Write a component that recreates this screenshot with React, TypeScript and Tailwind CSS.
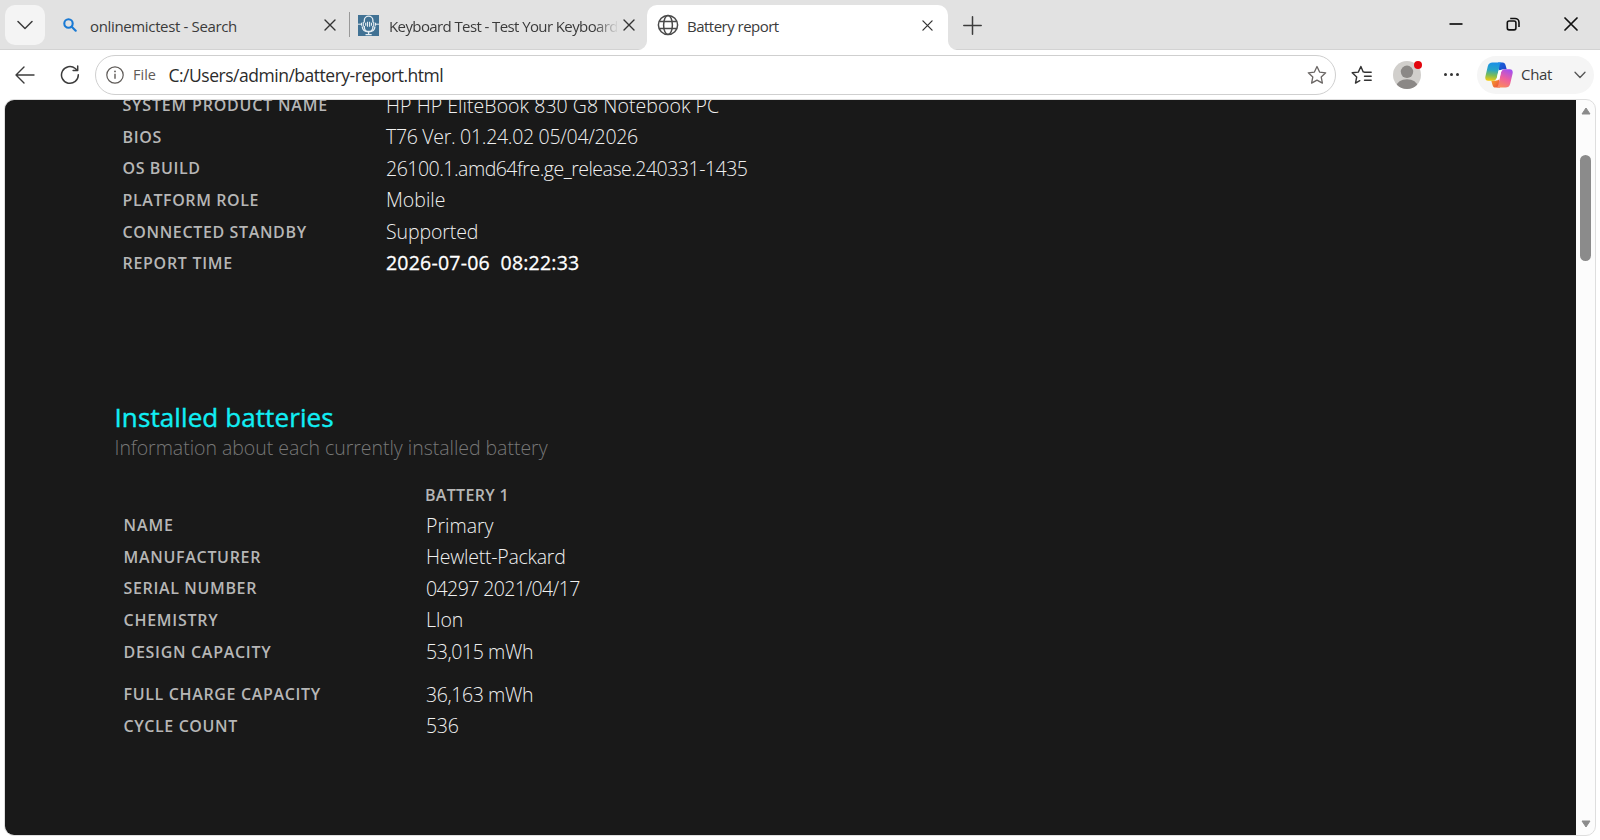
import type { ReactNode } from "react"

type Row = { label: string; value: string; strong?: boolean; tall?: boolean; labelTrack: string; valueTrack: string }

const systemRows: Row[] = [
  { label: "SYSTEM PRODUCT NAME", value: "HP HP EliteBook 830 G8 Notebook PC", labelTrack: "tracking-[0.800px]", valueTrack: "tracking-[0.050px]" },
  { label: "BIOS", value: "T76 Ver. 01.24.02 05/04/2026", labelTrack: "tracking-[0.700px]", valueTrack: "tracking-[-0.300px]" },
  { label: "OS BUILD", value: "26100.1.amd64fre.ge_release.240331-1435", labelTrack: "tracking-[0.600px]", valueTrack: "tracking-[-0.500px]" },
  { label: "PLATFORM ROLE", value: "Mobile", labelTrack: "tracking-[0.600px]", valueTrack: "tracking-[0px]" },
  { label: "CONNECTED STANDBY", value: "Supported", labelTrack: "tracking-[0.640px]", valueTrack: "tracking-[-0.100px]" },
  { label: "REPORT TIME", value: "2026-07-06  08:22:33", strong: true, labelTrack: "tracking-[0.700px]", valueTrack: "tracking-[0.220px]" },
]

const batteryRows: Row[] = [
  { label: "NAME", value: "Primary", labelTrack: "tracking-[0.900px]", valueTrack: "tracking-[0px]" },
  { label: "MANUFACTURER", value: "Hewlett-Packard", labelTrack: "tracking-[0.700px]", valueTrack: "tracking-[-0.250px]" },
  { label: "SERIAL NUMBER", value: "04297 2021/04/17", labelTrack: "tracking-[0.650px]", valueTrack: "tracking-[-0.580px]" },
  { label: "CHEMISTRY", value: "LIon", labelTrack: "tracking-[0.750px]", valueTrack: "tracking-[-0.200px]" },
  { label: "DESIGN CAPACITY", value: "53,015 mWh", labelTrack: "tracking-[0.700px]", valueTrack: "tracking-[-0.400px]" },
  { label: "FULL CHARGE CAPACITY", value: "36,163 mWh", tall: true, labelTrack: "tracking-[0.650px]", valueTrack: "tracking-[-0.400px]" },
  { label: "CYCLE COUNT", value: "536", labelTrack: "tracking-[0.600px]", valueTrack: "tracking-[-0.300px]" },
]

function CloseIcon({ className }: { className?: string }) {
  return (
    <svg viewBox="0 0 12 12" className={className} fill="none" stroke="currentColor" strokeWidth="1.4" strokeLinecap="round">
      <path d="M1 1l10 10M11 1L1 11" />
    </svg>
  )
}

function GlobeIcon() {
  return (
    <svg viewBox="0 0 22 22" className="h-[22px] w-[22px] shrink-0" fill="none" stroke="#4a4a4a" strokeWidth="1.5">
      <circle cx="11" cy="11" r="9.6" />
      <ellipse cx="11" cy="11" rx="4.4" ry="9.6" />
      <path d="M2.2 7.5h17.6M2.2 14.5h17.6" />
    </svg>
  )
}

function MicIcon() {
  return (
    <svg viewBox="0 0 21 21" className="h-[21px] w-[21px] shrink-0">
      <rect width="21" height="21" fill="#417294" />
      <g fill="none" stroke="#e6eef3" strokeWidth="1.3">
        <path d="M6.3 7.5V5.5a4.3 4.3 0 0 1 8.6 0v2M6.3 11v1.2a4.3 4.3 0 0 0 8.6 0V11" />
        <path d="M4.2 11.5c.3 3.4 2.8 5.4 6.4 5.4s6.1-2 6.4-5.4M10.6 17v2.6M7.5 19.6h6.2" />
        <path d="M0 9.2h3M18 9.2h3" strokeWidth="1" />
        <path d="M3.5 7.7v3M5.3 7v4.5M7.7 7.7v3M9.5 6.7v5M11.6 6.7v5M13.5 7.7v3M15.7 7v4.5M17.5 7.7v3" strokeWidth="1.1" />
      </g>
    </svg>
  )
}

function CopilotIcon() {
  return (
    <svg viewBox="0 0 28 26" className="h-[26px] w-[28px] shrink-0">
      <defs>
        <linearGradient id="cp-left" x1="0.4" y1="0" x2="0.3" y2="1">
          <stop offset="0" stopColor="#1b8fe8" />
          <stop offset="0.4" stopColor="#27a5c6" />
          <stop offset="0.7" stopColor="#7cbc57" />
          <stop offset="1" stopColor="#f2cb12" />
        </linearGradient>
        <linearGradient id="cp-right" x1="0.7" y1="0" x2="0.3" y2="1">
          <stop offset="0" stopColor="#a450ee" />
          <stop offset="0.5" stopColor="#ee5f9e" />
          <stop offset="1" stopColor="#fb8a58" />
        </linearGradient>
        <linearGradient id="cp-top" x1="0" y1="0" x2="1" y2="1">
          <stop offset="0" stopColor="#1868df" />
          <stop offset="1" stopColor="#1e3fc4" />
        </linearGradient>
        <linearGradient id="cp-bottom" x1="0" y1="0" x2="1" y2="1">
          <stop offset="0" stopColor="#f9b12a" />
          <stop offset="1" stopColor="#e8433c" />
        </linearGradient>
      </defs>
      <path d="M13 .4h4.6c1.6 0 2.5 1 2.9 2.6l1.2 4.3h-3.4c-2 0-3.4 1-4 3.2z" fill="url(#cp-top)" />
      <path d="M15 25.6h-4.6c-1.6 0-2.5-1-2.9-2.6l-1.2-4.3h3.4c2 0 3.4-1 4-3.2z" fill="url(#cp-bottom)" />
      <path d="M7.5 .4H17c-1.5.3-2 1.2-2.4 3L12 15.5c-.5 2-1.8 3.2-3.8 3.2H3.2C.8 18.7-.1 17 .4 14.5L2.8 4.2C3.5 1.6 5 .4 7.5 .4z" fill="url(#cp-left)" />
      <path d="M20.5 25.6H11c1.5-.3 2-1.2 2.4-3L16 10.5c.5-2 1.8-3.2 3.8-3.2h5c2.4 0 3.3 1.7 2.8 4.2l-2.4 10.3c-.7 2.6-2.2 3.8-4.7 3.8z" fill="url(#cp-right)" />
      <path d="M14.4 8h3.2c-1 .6-1.500 1.500-1.800 2.800l-1.300 5.400c-.3 1-.8 1.600-1.600 2h-2.800c1-.6 1.500-1.500 1.800-2.800l1.200-5.200c.200-1 .600-1.700 1.300-2.200z" fill="#fff" />
    </svg>
  )
}

function TabTitle({ children, className }: { children: ReactNode; className: string }) {
  return <span className={`overflow-hidden whitespace-nowrap text-[15px] leading-[22px] text-[#3b3b3b] ${className}`}>{children}</span>
}

function TabBar() {
  return (
    <div className="flex h-[50px] items-start border-b border-[#d3d3d3] bg-[#e2e2e2]">
      <div className="ml-[5px] mt-[5px] flex h-10 w-10 items-center justify-center rounded-[10px] bg-[#f4f4f4]">
        <svg viewBox="0 0 16 10" className="h-[10px] w-4" fill="none" stroke="#3c3c3c" strokeWidth="1.5" strokeLinecap="round" strokeLinejoin="round">
          <path d="M1 1.5l7 7 7-7" />
        </svg>
      </div>

      <div className="flex h-[50px] w-[304px] items-center pl-[18px]">
        <svg viewBox="0 0 14 14" className="h-[14px] w-[14px] shrink-0" fill="none" stroke="#1a7ad4" strokeWidth="2.1" strokeLinecap="round">
          <circle cx="5.5" cy="5.5" r="4.2" />
          <path d="M8.7 8.7l4 4" />
        </svg>
        <TabTitle className="ml-[13px] mt-px w-[230px] tracking-[-0.350px]">onlinemictest - Search</TabTitle>
        <CloseIcon className="ml-[4px] h-3 w-3 shrink-0 text-[#333]" />
      </div>

      <div className="mt-[12px] h-[25px] w-px bg-[#999]" />

      <div className="flex h-[50px] w-[297px] items-center pl-2">
        <MicIcon />
        <TabTitle className="ml-[10px] mt-px w-[228px] tracking-[-0.600px] [mask-image:linear-gradient(to_right,black_205px,transparent_230px)]">
          Keyboard Test - Test Your Keyboard
        </TabTitle>
        <CloseIcon className="ml-[6px] h-3 w-3 shrink-0 text-[#333]" />
      </div>

      <div className="relative mt-[5px] flex h-[45px] w-[301px] items-center rounded-t-[10px] bg-white pl-[10px]">
        <svg viewBox="0 0 9 9" className="absolute -left-[9px] bottom-0 h-[9px] w-[9px]">
          <path d="M9 0v9H0a9 9 0 0 0 9-9z" fill="#fff" />
        </svg>
        <svg viewBox="0 0 9 9" className="absolute -right-[9px] bottom-0 h-[9px] w-[9px]">
          <path d="M0 0v9h9a9 9 0 0 1-9-9z" fill="#fff" />
        </svg>
        <div className="mb-[5px] flex items-center">
          <GlobeIcon />
          <TabTitle className="ml-[8px] mt-px w-[231px] tracking-[-0.520px]">Battery report</TabTitle>
          <CloseIcon className="ml-[4px] h-[11px] w-[11px] shrink-0 text-[#333]" />
        </div>
      </div>

      <svg viewBox="0 0 19 19" className="ml-[15px] mt-[16px] h-[19px] w-[19px]" fill="none" stroke="#3c3c3c" strokeWidth="1.5" strokeLinecap="round">
        <path d="M9.5 0.8v17.4M0.8 9.5h17.4" />
      </svg>

      <div className="ml-auto mr-[22px] mt-[17px] flex items-center">
        <svg viewBox="0 0 14 14" className="h-[14px] w-[14px]" stroke="#111" strokeWidth="1.7">
          <path d="M0.5 7h13" />
        </svg>
        <svg viewBox="0 0 14 14" className="ml-[43px] h-[14px] w-[14px]" fill="none" stroke="#111" strokeWidth="1.6">
          <rect x="1.3" y="4" width="8.6" height="8.9" rx="1.8" />
          <path d="M4.2 1.5h4.8a4 4 0 0 1 4 4v4.5" />
        </svg>
        <svg viewBox="0 0 14 14" className="ml-[44px] h-[14px] w-[14px]" stroke="#111" strokeWidth="1.7" strokeLinecap="round">
          <path d="M1 1l12 12M13 1L1 13" />
        </svg>
      </div>
    </div>
  )
}

const starPath = "M10 1.5l2.6 5.6 6.1.7-4.5 4.2 1.2 6.1L10 15.1l-5.4 3 1.2-6.1L1.3 7.8l6.1-.7z"

function AddressBar() {
  return (
    <div className="flex h-[49px] items-center bg-white">
      <svg viewBox="0 0 20 18" className="ml-[15px] h-[18px] w-5" fill="none" stroke="#3c3c3c" strokeWidth="1.4" strokeLinecap="round" strokeLinejoin="round">
        <path d="M19 9H1M9 1L1 9l8 8" />
      </svg>
      <svg viewBox="0 0 20 20" className="ml-[25px] h-5 w-5" fill="none" stroke="#3c3c3c" strokeWidth="1.5" strokeLinecap="round" strokeLinejoin="round">
        <path d="M18.3 9.7A8.4 8.4 0 1 1 15.3 3.5l2.3 2M17.7 1v4.6h-4.6" />
      </svg>

      <div className="ml-[15px] flex h-10 w-[1241px] items-center rounded-full border border-[#cfcfcf] bg-white">
        <svg viewBox="0 0 18 18" className="ml-[10px] h-[18px] w-[18px]" fill="none" stroke="#5f5b58" strokeWidth="1.2">
          <circle cx="9" cy="9" r="8.2" />
          <path d="M9 7.8v5" strokeWidth="1.4" />
          <circle cx="9" cy="5.4" r="0.9" fill="#5f5b58" stroke="none" />
        </svg>
        <span className="ml-[9px] text-[14.5px] text-[#5f5b58]">File</span>
        <span className="ml-[12.500px] mt-[2px] text-[17.5px] tracking-[-0.480px] text-[#2b2b2b]">C:/Users/admin/battery-report.html</span>
        <svg viewBox="0 0 20 20" className="ml-auto mr-[8px] h-5 w-5" fill="none" stroke="#6a6664" strokeWidth="1.3" strokeLinejoin="round">
          <path d={starPath} />
        </svg>
      </div>

      <svg viewBox="0 0 21 20" className="ml-[15px] h-5 w-[21px]" fill="none" stroke="#333" strokeWidth="1.4" strokeLinecap="round" strokeLinejoin="round">
        <path d="M13 7l-.8-.1L9.9 1.5 7.3 7.1l-6.1.7L5.7 12l-1.2 6.1 4.3-2.4M13.5 7.3h6.7M13.5 11.3h6.7M13.5 15.3h6.7" />
      </svg>

      <div className="relative ml-[21px] h-7 w-7">
        <svg viewBox="0 0 28 28" className="h-7 w-7">
          <clipPath id="avatar-clip">
            <circle cx="14" cy="14" r="14" />
          </clipPath>
          <g clipPath="url(#avatar-clip)">
            <rect width="28" height="28" fill="#d1cfcc" />
            <circle cx="14" cy="10.8" r="6.2" fill="#8b8886" />
            <ellipse cx="14" cy="25.5" rx="10.5" ry="7.3" fill="#8b8886" />
          </g>
        </svg>
        <div className="absolute -right-px top-0 h-[8px] w-[8px] rounded-full bg-[#e3050d]" />
      </div>

      <div className="ml-[23px] flex gap-[3px]">
        <div className="h-[3px] w-[3px] rounded-full bg-[#333]" />
        <div className="h-[3px] w-[3px] rounded-full bg-[#333]" />
        <div className="h-[3px] w-[3px] rounded-full bg-[#333]" />
      </div>

      <div className="ml-auto mr-[6px] flex h-[38px] w-[117px] items-center rounded-full bg-[#f5f5f5] pl-2">
        <CopilotIcon />
        <span className="ml-[8px] text-[15px] tracking-[-0.3px] text-[#3b3b3b]">Chat</span>
        <svg viewBox="0 0 12 8" className="ml-auto mr-[8px] h-2 w-3" fill="none" stroke="#555" strokeWidth="1.3" strokeLinecap="round" strokeLinejoin="round">
          <path d="M1 1.2l5 5.3 5-5.3" />
        </svg>
      </div>
    </div>
  )
}

function ReportRow({ row, labelWidth }: { row: Row; labelWidth: string }) {
  return (
    <div className={`flex h-[31.6px] items-start whitespace-pre leading-[31.6px] ${row.tall ? "mt-[11px]" : ""}`}>
      <span className={`shrink-0 pt-[0.700px] text-[16px] font-semibold text-[#b6b6b6] ${labelWidth} ${row.labelTrack}`}>{row.label}</span>
      <span className={`text-[19.5px] ${row.strong ? "font-medium text-white [-webkit-text-stroke:0.3px]" : "font-light text-[#f0f0f0]"} ${row.valueTrack}`}>{row.value}</span>
    </div>
  )
}

function Report() {
  return (
    <main className="h-[735px] flex-1 overflow-hidden bg-[#191919]">
      <div className="-mt-[10.500px] pl-[117.500px]">
        {systemRows.map((row) => (
          <ReportRow key={row.label} row={row} labelWidth="w-[263.500px]" />
        ))}
      </div>

      <section className="mt-[119.500px] pl-[109.5px]">
        <h2 className="text-[26px] font-medium leading-[36px] tracking-[0.100px] text-[#11eef4] [-webkit-text-stroke:0.4px]">Installed batteries</h2>
        <p className="text-[19.5px] font-light leading-[26px] tracking-[-0.030px] text-[#777]">Information about each currently installed battery</p>
        <div className="mt-[19px] pl-[9px]">
          <div className="pl-[301.5px] text-[16px] font-semibold leading-[31px] tracking-[0.3px] text-[#b6b6b6]">BATTERY 1</div>
          <div className="-mt-px">
            {batteryRows.map((row) => (
              <ReportRow key={row.label} row={row} labelWidth="w-[302.5px]" />
            ))}
          </div>
        </div>
      </section>
    </main>
  )
}

export default function App() {
  return (
    <div className="h-[840px] w-[1600px] overflow-hidden bg-white font-['Open_Sans','Noto_Sans',sans-serif]">
      <TabBar />
      <AddressBar />
      <div className="ml-[4px] flex h-[737px] w-[1592px] overflow-hidden rounded-[10px] border border-[#dedede] bg-[#fcfcfc]">
        <Report />
        <div className="flex w-[19px] flex-col items-center">
          <svg viewBox="0 0 10 8" className="mt-[7px] h-2 w-[10px]">
            <path d="M5 1l4 6H1z" fill="#8b8b8b" stroke="#8b8b8b" strokeLinejoin="round" />
          </svg>
          <div className="mt-[40px] h-[106px] w-[11px] rounded-full bg-[#8b8b8b]" />
          <svg viewBox="0 0 10 8" className="mb-[7px] mt-auto h-2 w-[10px]">
            <path d="M5 7l4-6H1z" fill="#8b8b8b" stroke="#8b8b8b" strokeLinejoin="round" />
          </svg>
        </div>
      </div>
    </div>
  )
}
